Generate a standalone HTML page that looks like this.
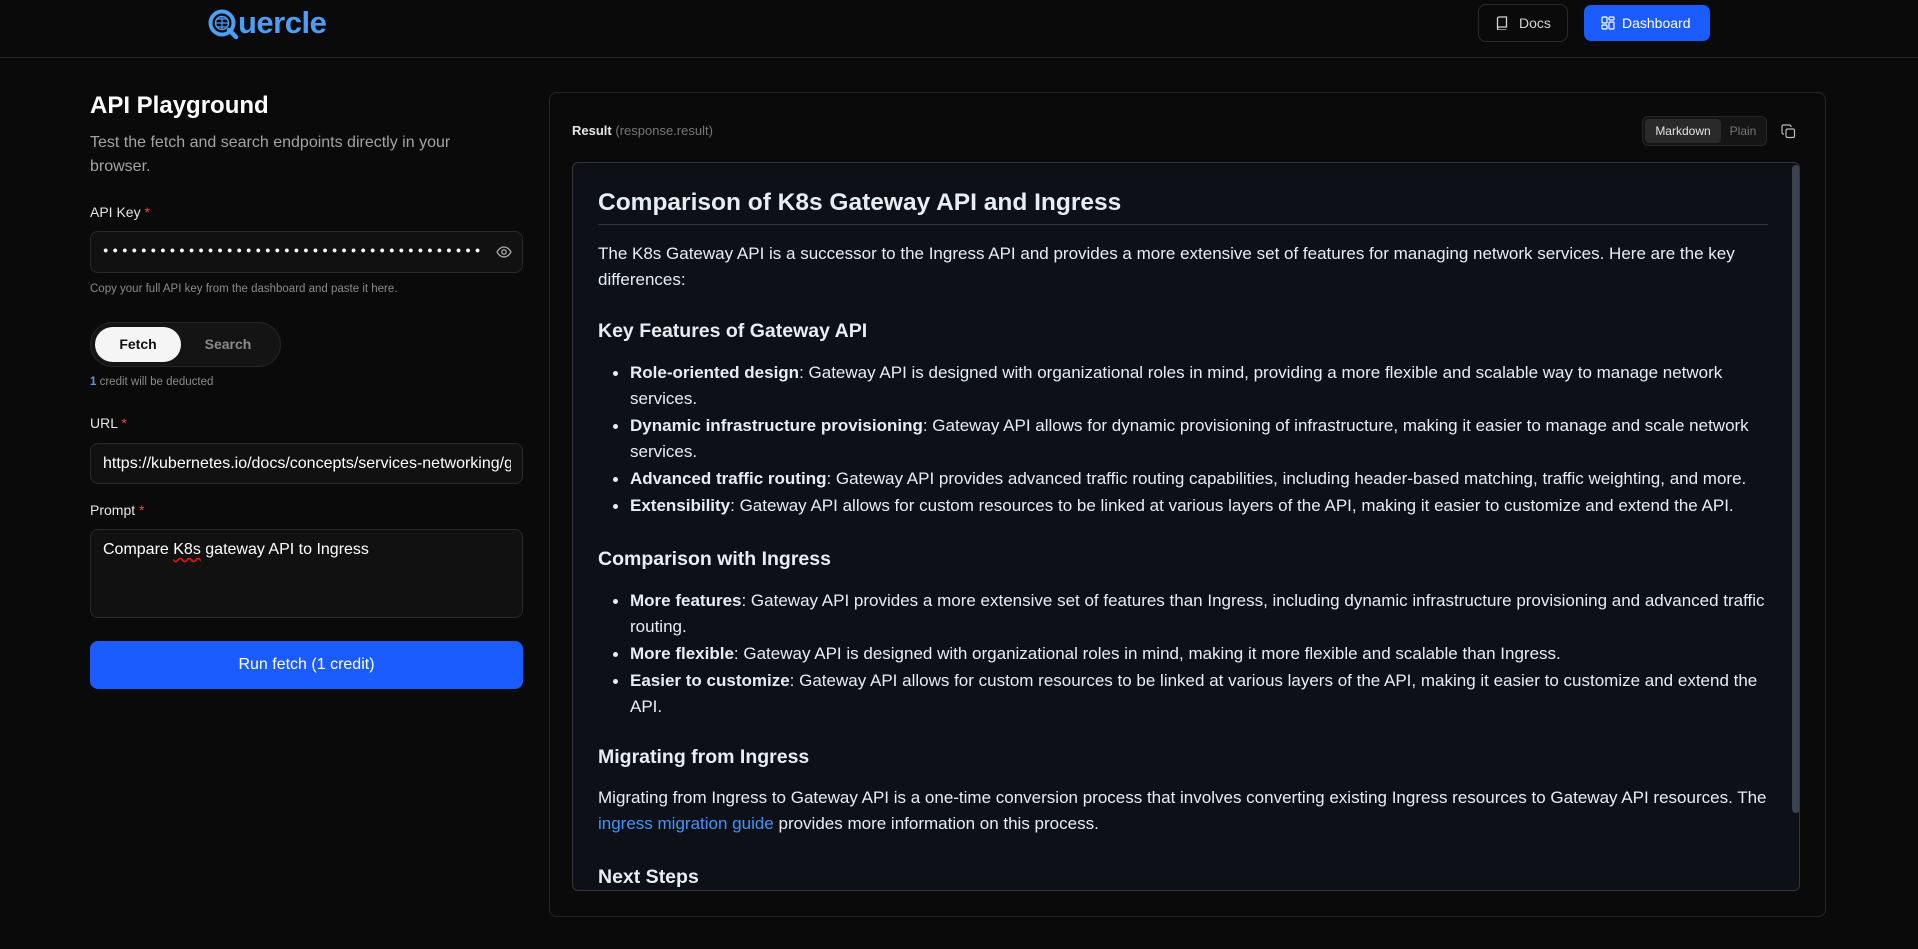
<!DOCTYPE html>
<html><head><meta charset="utf-8"><style>
*{box-sizing:border-box;margin:0;padding:0}
body{width:1918px;height:949px;background:#0a0a0a;font-family:"Liberation Sans",sans-serif;color:#e5e5e5;position:relative;overflow:hidden}
.hdr{position:absolute;left:0;top:0;width:1918px;height:58px;border-bottom:1px solid #222}
.abs{position:absolute}
.lbl{position:absolute;left:90px;font-size:14px;color:#e5e5e5}
.lbl b{color:#ef4444;font-weight:normal}
.inp{position:absolute;left:90px;width:433px;background:#111;border:1px solid #2a2a2a;border-radius:8px}
.panel{position:absolute;left:549px;top:92px;width:1277px;height:825px;border:1px solid #262626;border-radius:8px}
.md{position:absolute;left:572px;top:162px;width:1228px;height:729px;background:#0d1117;border:1px solid #30363d;border-radius:6px;overflow:hidden;color:#e6edf3;font-size:17px}
.md .t{position:absolute;left:25px;white-space:nowrap;line-height:26px}
.h1{font-size:24.5px;font-weight:bold}
.h2{font-size:19.5px;font-weight:bold}
.dot{position:absolute;left:40px;width:5px;height:5px;border-radius:50%;background:#e6edf3}
</style></head><body>
<div class="hdr"></div>
<svg class="abs" style="left:206px;top:8px" width="34" height="32" viewBox="0 0 34 32">
<circle cx="16" cy="15" r="11.5" fill="none" stroke="#4d9ef5" stroke-width="4"/>
<circle cx="16" cy="15" r="6.5" fill="none" stroke="#4d9ef5" stroke-width="1.5"/>
<path d="M9.5 15h13M16 8.5v13M11 11h10M11 19h10" stroke="#4d9ef5" stroke-width="1.2"/>
<path d="M23 22l7 7" stroke="#4d9ef5" stroke-width="4.5" stroke-linecap="round"/>
</svg>
<div class="abs" style="left:238px;top:5px;font-size:31px;font-weight:bold;color:#4d9ef5;letter-spacing:-0.5px">uercle</div>
<div class="abs" style="left:1478px;top:4px;width:90px;height:38px;border:1px solid #2a2a2a;border-radius:8px;font-size:14px;color:#d4d4d4;line-height:36px;padding-left:40px">Docs</div>
<svg class="abs" style="left:1496px;top:16px" width="12" height="14" viewBox="0 0 12 14"><path d="M1.5 12V2.5A1.5 1.5 0 0 1 3 1h7.5v10H3a1.5 1.5 0 0 0 0 3h7.5" fill="none" stroke="#d4d4d4" stroke-width="1.3"/></svg>
<div class="abs" style="left:1584px;top:5px;width:126px;height:36px;background:#1a5cff;border-radius:7px;font-size:14px;color:#fff;line-height:36px;padding-left:38px">Dashboard</div>
<svg class="abs" style="left:1601px;top:16px" width="14" height="14" viewBox="0 0 14 14" fill="none" stroke="#fff" stroke-width="1.2"><rect x="1" y="1" width="5" height="6" rx="1"/><rect x="8" y="1" width="5" height="3" rx="1"/><rect x="8" y="6" width="5" height="7" rx="1"/><rect x="1" y="9" width="5" height="4" rx="1"/></svg>

<div class="abs" style="left:90px;top:92px;font-size:24px;font-weight:bold;color:#fff">API Playground</div>
<div class="abs" style="left:90px;top:131px;width:390px;font-size:16px;line-height:24px;color:#a3a3a3">Test the fetch and search endpoints directly in your browser.</div>
<div class="lbl" style="top:204px">API Key <b>*</b></div>
<div class="inp" style="top:231px;height:42px"><div class="abs" style="left:12px;top:13px;font-size:9px;color:#fff;letter-spacing:4.1px;white-space:nowrap;overflow:hidden;width:382px">●●●●●●●●●●●●●●●●●●●●●●●●●●●●●●●●●●●●●●●●●●</div></div>
<svg class="abs" style="left:496px;top:245px" width="16" height="14" viewBox="0 0 16 14" fill="none" stroke="#aaa" stroke-width="1.3"><path d="M1 7s2.5-5 7-5 7 5 7 5-2.5 5-7 5-7-5-7-5z"/><circle cx="8" cy="7" r="2.2"/></svg>
<div class="abs" style="left:90px;top:283px;font-size:11.5px;color:#8a8a8a">Copy your full API key from the dashboard and paste it here.</div>
<div class="abs" style="left:90px;top:322px;width:191px;height:45px;background:#141414;border:1px solid #262626;border-radius:23px"></div>
<div class="abs" style="left:95px;top:327px;width:86px;height:35px;background:#f5f5f5;border-radius:18px;color:#111;font-size:14px;font-weight:bold;text-align:center;line-height:35px">Fetch</div>
<div class="abs" style="left:181px;top:327px;width:94px;height:35px;color:#8a8a8a;font-size:14px;font-weight:bold;text-align:center;line-height:35px">Search</div>
<div class="abs" style="left:90px;top:376px;font-size:11.5px;color:#8a8a8a"><span style="color:#4d9ef5;font-weight:bold">1</span> credit will be deducted</div>
<div class="lbl" style="top:415px">URL <b>*</b></div>
<div class="inp" style="top:443px;height:41px"><div class="abs" style="left:12px;top:11px;font-size:16px;color:#fff;white-space:nowrap;overflow:hidden;width:408px">https://kubernetes.io/docs/concepts/services-networking/gateway/</div></div>
<div class="lbl" style="top:502px">Prompt <b>*</b></div>
<div class="inp" style="top:529px;height:89px"><div class="abs" style="left:12px;top:11px;font-size:16px;color:#fff;white-space:nowrap">Compare <span style="text-decoration:underline wavy #e11;text-underline-offset:3px">K8s</span> gateway API to Ingress</div></div>
<div class="abs" style="left:90px;top:641px;width:433px;height:48px;background:#1a5cff;border-radius:8px;color:#fff;font-size:16px;text-align:center;line-height:48px">Run fetch (1 credit)</div>

<div class="panel"></div>
<div class="abs" style="left:572px;top:123px;font-size:13px;color:#e5e5e5"><b>Result</b> <span style="color:#777">(response.result)</span></div>
<div class="abs" style="left:1642px;top:116px;width:125px;height:30px;background:#151515;border:1px solid #262626;border-radius:6px"></div>
<div class="abs" style="left:1645px;top:119px;width:76px;height:24px;background:#2a2a2a;border-radius:4px;font-size:12px;color:#e5e5e5;text-align:center;line-height:24px">Markdown</div>
<div class="abs" style="left:1722px;top:119px;width:42px;height:24px;font-size:12px;color:#777;text-align:center;line-height:24px">Plain</div>
<svg class="abs" style="left:1781px;top:124px" width="15" height="15" viewBox="0 0 15 15" fill="none" stroke="#bbb" stroke-width="1.2"><rect x="5" y="5" width="8.5" height="8.5" rx="1.5"/><path d="M3 10H2.5A1.5 1.5 0 0 1 1 8.5v-6A1.5 1.5 0 0 1 2.5 1h6A1.5 1.5 0 0 1 10 2.5V3"/></svg>

<div class="md">
<div class="t h1" style="top:25px;line-height:30px">Comparison of K8s Gateway API and Ingress</div>
<div class="abs" style="left:25px;top:61px;width:1170px;height:1px;background:#30363d"></div>
<div class="t" style="top:78px">The K8s Gateway API is a successor to the Ingress API and provides a more extensive set of features for managing network services. Here are the key<br>differences:</div>
<div class="t h2" style="top:155px">Key Features of Gateway API</div>
<div class="dot" style="top:208px"></div>
<div class="t" style="left:57px;top:197px"><b>Role-oriented design</b>: Gateway API is designed with organizational roles in mind, providing a more flexible and scalable way to manage network<br>services.</div>
<div class="dot" style="top:261px"></div>
<div class="t" style="left:57px;top:250px"><b>Dynamic infrastructure provisioning</b>: Gateway API allows for dynamic provisioning of infrastructure, making it easier to manage and scale network<br>services.</div>
<div class="dot" style="top:314px"></div>
<div class="t" style="left:57px;top:303px"><b>Advanced traffic routing</b>: Gateway API provides advanced traffic routing capabilities, including header-based matching, traffic weighting, and more.</div>
<div class="dot" style="top:341px"></div>
<div class="t" style="left:57px;top:330px"><b>Extensibility</b>: Gateway API allows for custom resources to be linked at various layers of the API, making it easier to customize and extend the API.</div>
<div class="t h2" style="top:383px">Comparison with Ingress</div>
<div class="dot" style="top:436px"></div>
<div class="t" style="left:57px;top:425px"><b>More features</b>: Gateway API provides a more extensive set of features than Ingress, including dynamic infrastructure provisioning and advanced traffic<br>routing.</div>
<div class="dot" style="top:489px"></div>
<div class="t" style="left:57px;top:478px"><b>More flexible</b>: Gateway API is designed with organizational roles in mind, making it more flexible and scalable than Ingress.</div>
<div class="dot" style="top:516px"></div>
<div class="t" style="left:57px;top:505px"><b>Easier to customize</b>: Gateway API allows for custom resources to be linked at various layers of the API, making it easier to customize and extend the<br>API.</div>
<div class="t h2" style="top:581px">Migrating from Ingress</div>
<div class="t" style="top:622px">Migrating from Ingress to Gateway API is a one-time conversion process that involves converting existing Ingress resources to Gateway API resources. The<br><span style="color:#4493f8">ingress migration guide</span> provides more information on this process.</div>
<div class="t h2" style="top:701px">Next Steps</div>
<div class="abs" style="left:1219px;top:2px;width:8px;height:648px;background:#3b4250;border-radius:4px"></div>
</div>
</body></html>
